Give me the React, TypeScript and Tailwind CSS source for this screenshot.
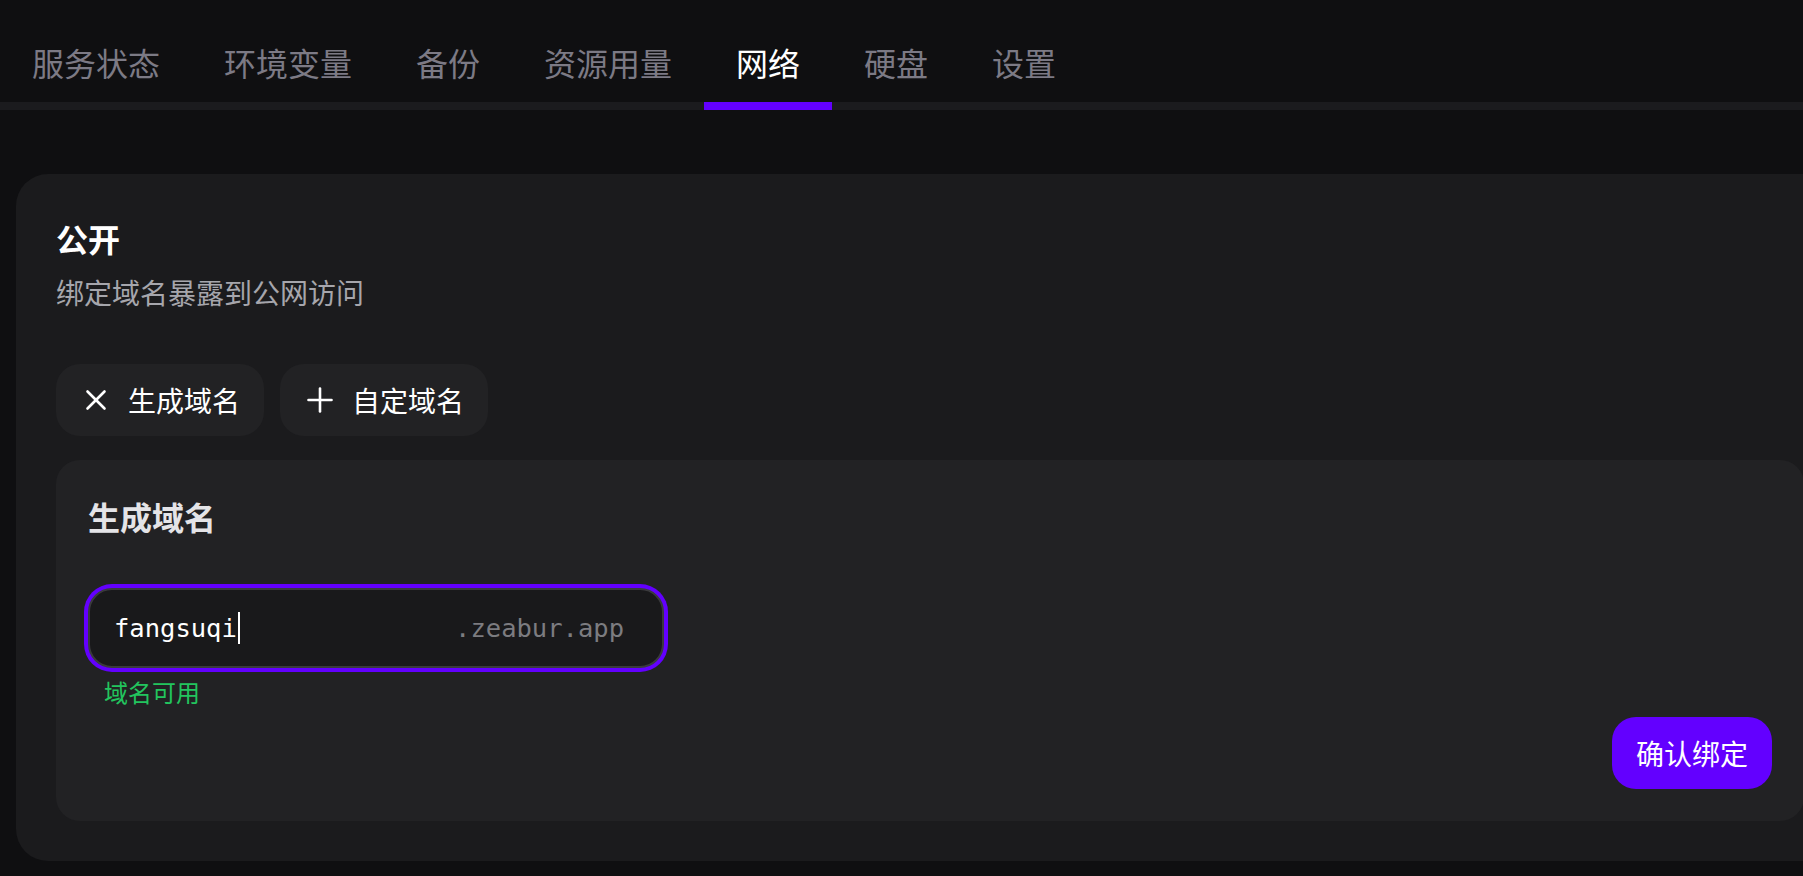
import React from "react";

const tabs = ["服务状态", "环境变量", "备份", "资源用量", "网络", "硬盘", "设置"];

function XIcon() {
  return (
    <svg width="32" height="32" viewBox="0 0 32 32" fill="none" stroke="currentColor" strokeWidth="2.6" strokeLinecap="round">
      <path d="M7.5 7.5 24.5 24.5" />
      <path d="M24.5 7.5 7.5 24.5" />
    </svg>
  );
}

function PlusIcon() {
  return (
    <svg width="32" height="32" viewBox="0 0 32 32" fill="none" stroke="currentColor" strokeWidth="2.6" strokeLinecap="round">
      <path d="M4.5 16h23" />
      <path d="M16 4.5v23" />
    </svg>
  );
}

function TabBar() {
  return (
    <div className="flex border-b-8 border-[#1b1b1e]">
      {tabs.map((t) => {
        const active = t === "网络";
        return (
          <div
            key={t}
            className={
              active
                ? "-mb-2 border-b-8 border-[#6300ff] px-8 pt-[38px] pb-4 text-[32px] leading-[48px] text-white"
                : "-mb-2 border-b-8 border-transparent px-8 pt-[38px] pb-4 text-[32px] leading-[48px] text-[#7c7a85]"
            }
          >
            {t}
          </div>
        );
      })}
    </div>
  );
}

function DomainInput() {
  return (
    <div className="flex h-20 w-[576px] items-center justify-between rounded-3xl border-2 border-[#3a3a3d] bg-[#19191b] pl-6 pr-[38px] ring-4 ring-[#6300ff] font-['DejaVu_Sans_Mono',monospace] text-[25.5px]">
      <div className="flex items-center">
        <span className="text-white">fangsuqi</span>
        <span className="ml-[1px] h-8 w-[2px] bg-white" />
      </div>
      <span className="text-[#7c7c80]">.zeabur.app</span>
    </div>
  );
}

export default function App() {
  return (
    <div className="h-screen w-screen overflow-hidden bg-[#0f0f11] font-['Noto_Sans_CJK_SC',sans-serif]">
      <div className="w-[1860px]">
        <TabBar />
        <div className="ml-4 mt-16 w-[1828px] rounded-[32px] bg-[#1b1b1d] p-10">
          <div className="text-[32px] font-bold leading-[48px] text-white">公开</div>
          <div className="mt-2 text-[28px] leading-[44px] text-[#a6a6ac]">绑定域名暴露到公网访问</div>

          <div className="mt-[50px] flex gap-4">
            <button className="flex h-[72px] items-center gap-4 rounded-3xl bg-[#222224] px-6 text-[28px] text-white">
              <XIcon />
              <span>生成域名</span>
            </button>
            <button className="flex h-[72px] items-center gap-4 rounded-3xl bg-[#222224] px-6 text-[28px] text-white">
              <PlusIcon />
              <span>自定域名</span>
            </button>
          </div>

          <div className="mt-6 rounded-3xl bg-[#222224] p-8">
            <div className="text-[32px] font-bold leading-[48px] text-[#e4e4e7]">生成域名</div>
            <div className="mt-12">
              <DomainInput />
            </div>
            <div className="mt-2 pl-4 text-[24px] leading-8 text-[#22c55e]">域名可用</div>
            <div className="mt-[9px] flex justify-end">
              <button className="h-[72px] rounded-3xl bg-[#6300ff] px-6 text-[28px] text-white">确认绑定</button>
            </div>
          </div>
        </div>
      </div>
    </div>
  );
}
